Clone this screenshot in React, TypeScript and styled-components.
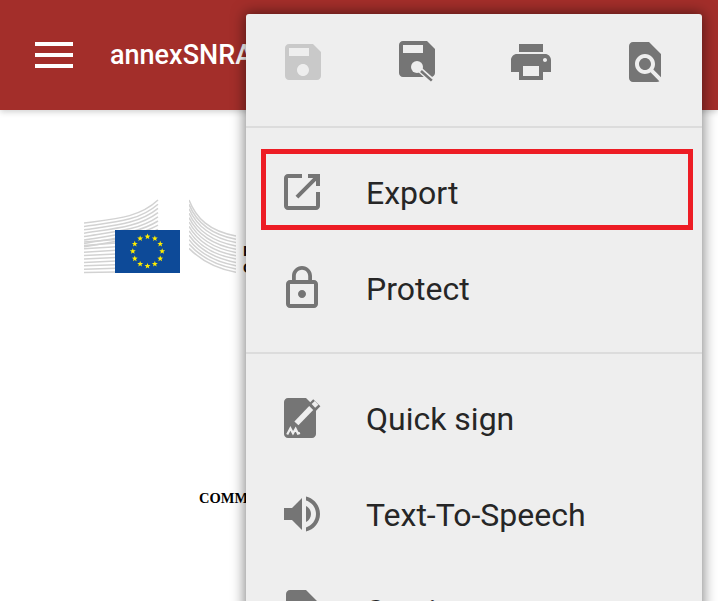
import React, { FC } from "react";
import styled, { createGlobalStyle } from "styled-components";

const GlobalStyle = createGlobalStyle`
    html, body{
        margin: 0;
        padding: 0;
        background: #fff;
    }
    body{
        font-family: "Roboto", "Liberation Sans", sans-serif;
    }
`;

const Screen = styled.div`
    width: 718px;
    height: 601px;
    position: relative;
    overflow: hidden;
    background: #fff;
`;

const Header = styled.header`
    height: 110px;
    background: #a32e2a;
    display: flex;
    align-items: center;
    padding-left: 35px;
    gap: 37px;
    box-shadow: 0 2px 6px rgba(0,0,0,.18);
`;

const Title = styled.h1`
    margin: 0;
    color: #fff;
    font-size: 27px;
    font-weight: 500;
    white-space: nowrap;
`;

const Page = styled.main`
    padding: 88px 0 0 84px;
`;

const LogoRow = styled.div`
    display: flex;
    align-items: flex-start;
    gap: 7px;
`;

const LogoCaption = styled.div`
    padding-top: 44px;
    font-family: "Liberation Sans", sans-serif;
    font-weight: 700;
    font-size: 15px;
    line-height: 17px;
    color: #111;
    white-space: nowrap;
`;

const DocHeading = styled.div`
    margin: 214px 0 0 115px;
    font-family: "Liberation Serif", serif;
    font-weight: 700;
    font-size: 14.5px;
    line-height: 16px;
    color: #000;
    white-space: nowrap;
`;

const Menu = styled.nav`
    position: absolute;
    left: 246px;
    top: 14px;
    width: 456px;
    background: #eeeeee;
    border-radius: 3px 3px 0 0;
    box-shadow: 0 0 14px 1px rgba(0,0,0,.5);
`;

const ToolRow = styled.div`
    display: grid;
    grid-template-columns: repeat(4, 1fr);
    padding-bottom: 16px;
`;

const ToolButton = styled.button`
    height: 96px;
    border: none;
    background: none;
    padding: 0;
    display: flex;
    align-items: center;
    justify-content: center;
`;

const Section = styled.section`
    padding: 16px 0;
    border-top: 2px solid #dcdcdc;
`;

const Item = styled.div`
    height: 96px;
    position: relative;
    display: flex;
    align-items: center;
    padding-left: 32px;
    gap: 40px;
    color: #262626;
    font-size: 32px;
`;

const ItemLabel = styled.span`
    padding-top: 2px;
`;

const Highlight = styled.div`
    position: absolute;
    left: 15px;
    right: 9px;
    top: 5px;
    bottom: 10px;
    border: 5px solid #ed1c24;
`;

const Icon = styled.svg<{ $tone?: string }>`
    width: 48px;
    height: 48px;
    flex: none;
    display: block;
    fill: ${(props) => props.$tone || "#757575"};
`;

const SAVE = "M17 3H5c-1.11 0-2 .9-2 2v14c0 1.1.89 2 2 2h14c1.1 0 2-.9 2-2V7l-4-4zm-5 16c-1.66 0-3-1.34-3-3s1.34-3 3-3 3 1.34 3 3-1.34 3-3 3zm3-10H5V5h10v4z";
const SAVE_SOLID = "M17 3H5c-1.11 0-2 .9-2 2v14c0 1.1.89 2 2 2h14c1.1 0 2-.9 2-2V7l-4-4zm-2 6H5V5h10v4z";
const PRINT = "M19 8H5c-1.66 0-3 1.34-3 3v6h4v4h12v-4h4v-6c0-1.66-1.34-3-3-3zm-3 11H8v-5h8v5zm3-7c-.55 0-1-.45-1-1s.45-1 1-1 1 .45 1 1-.45 1-1 1zm-1-9H6v4h12V3z";
const FIND = "M20 19.59V8l-6-6H6c-1.1 0-1.99.9-1.99 2L4 20c0 1.1.89 2 1.99 2H18c.45 0 .85-.15 1.19-.4l-4.43-4.43c-.8.52-1.74.83-2.76.83-2.76 0-5-2.24-5-5s2.24-5 5-5 5 2.24 5 5c0 1.02-.31 1.96-.83 2.75L20 19.59zM9 13c0 1.66 1.34 3 3 3s3-1.34 3-3-1.34-3-3-3-3 1.34-3 3z";
const EXPORT = "M19 19H5V5h7V3H5c-1.11 0-2 .9-2 2v14c0 1.1.89 2 2 2h14c1.1 0 2-.9 2-2v-7h-2v7zM15 3v2h2.59l-8.83 8.83 1.41 1.41L19 6.41V9h2V3h-6z";
const LOCK = "M12 17c1.1 0 2-.9 2-2s-.9-2-2-2-2 .9-2 2 .9 2 2 2zm6-9h-1V6c0-2.76-2.24-5-5-5S7 3.24 7 6v2H6c-1.1 0-2 .9-2 2v10c0 1.1.9 2 2 2h12c1.1 0 2-.9 2-2V10c0-1.1-.9-2-2-2zM8.9 6c0-1.71 1.39-3.1 3.1-3.1s3.1 1.39 3.1 3.1v2H8.9V6zM18 20H6V10h12v10z";
const SPEAKER = "M3 9v6h4l5 5V4L7 9H3zm13.5 3c0-1.77-1.02-3.29-2.5-4.03v8.05c1.48-.73 2.5-2.25 2.5-4.02zM14 3.23v2.06c2.89.86 5 3.54 5 6.71s-2.11 5.85-5 6.71v2.06c4.01-.91 7-4.49 7-8.77s-2.99-7.86-7-8.77z";
const DOC = "M14 2H6c-1.1 0-1.99.9-1.99 2L4 20c0 1.1.89 2 1.99 2H18c1.1 0 2-.9 2-2V8l-6-6z";

const Glyph: FC<{ d: string; tone?: string }> = ({ d, tone }) => (
    <Icon viewBox="0 0 24 24" $tone={tone}>
        <path d={d} />
    </Icon>
);

// sits 3px higher than the other toolbar icons because of the pencil
const SaveAsIcon: FC = () => (
    <Icon viewBox="0 1.5 24 24">
        <path d={SAVE_SOLID} />
        <circle cx="12" cy="16" r="3" fill="#eee" />
        <path d="M13 17l6.2 5.6" stroke="#eee" strokeWidth="2.8" />
        <path d="M14 18l5.4 4.8" stroke="#757575" strokeWidth="1.3" />
    </Icon>
);

const QuickSignIcon: FC = () => (
    <Icon viewBox="0 0 24 24">
        <path d="M5 2h9l5 5v13c0 1.1-.9 2-2 2H5c-1.1 0-2-.9-2-2V4c0-1.1.9-2 2-2z" />
        <path d="M14 10L19.4 4.4" stroke="#757575" strokeWidth="5" fill="none" />
        <path d="M9.2 14.7L16.6 7" stroke="#eee" strokeWidth="2.8" fill="none" />
        <path d="M17.7 5.9L19.3 4.4" stroke="#eee" strokeWidth="2.6" fill="none" />
        <path d="M4.6 20.2l1.6-3 1.3 2.4 1.3-2.2 1.2 2.4 1-.3" stroke="#eee" strokeWidth="1.1" fill="none" />
    </Icon>
);

const LogoSvg = styled.svg`
    width: 152px;
    height: 76px;
    flex: none;
    display: block;
    fill: none;
`;

const WingLine = styled.path`
    stroke: #d2d2d2;
    stroke-width: 1.5;
`;

const FLAG_CENTER = { x: 63.5, y: 53.3 };
const STAR_RADIUS = 14.7;

const starPoints = (cx: number, cy: number, r: number) => {
    const pts: string[] = [];
    for (let i = 0; i < 10; i++) {
        const rad = i % 2 === 0 ? r : r * 0.42;
        const a = (Math.PI / 5) * i - Math.PI / 2;
        pts.push(`${(cx + rad * Math.cos(a)).toFixed(2)},${(cy + rad * Math.sin(a)).toFixed(2)}`);
    }
    return pts.join(" ");
};

const Logo: FC = () => {
    const leftTop = Array.from({ length: 8 }).map((_, i) => (
        <WingLine key={i} d={`M0 ${25 + i * 3.4} C30 ${21 + i * 3.2} 55 ${20 + i * 3} 74 ${2 + i * 4.2}`} />
    ));
    const leftBottom = Array.from({ length: 10 }).map((_, i) => (
        <WingLine key={i} d={`M0 ${44 + i * 3.4} L32 ${41.5 + i * 3.6}`} />
    ));
    const right = Array.from({ length: 12 }).map((_, i) => (
        <WingLine key={i} d={`M105 ${2 + i * 4.4} C112 ${20 + i * 3.4} 125 ${33 + i * 3.3} 152 ${38 + i * 3.3}`} />
    ));
    const stars = Array.from({ length: 12 }).map((_, i) => {
        const a = (Math.PI / 6) * i;
        const x = FLAG_CENTER.x + STAR_RADIUS * Math.sin(a);
        const y = FLAG_CENTER.y - STAR_RADIUS * Math.cos(a);
        return <polygon key={i} points={starPoints(x, y, 3.1)} fill="#ffed00" />;
    });
    return (
        <LogoSvg viewBox="0 0 152 76">
            {leftTop}
            {leftBottom}
            {right}
            <rect x="31" y="32" width="65" height="43" fill="#0d4a98" />
            <rect x="96" y="0" width="9" height="76" fill="#fff" />
            {stars}
        </LogoSvg>
    );
};

const MenuBars = styled.svg`
    width: 38px;
    height: 26px;
    flex: none;
    display: block;
    fill: #fff;
`;

const App: FC = () => {
    return (
        <Screen>
            <GlobalStyle />
            <Header>
                <MenuBars viewBox="0 0 38 26">
                    <rect x="0" y="0" width="38" height="4" />
                    <rect x="0" y="11" width="38" height="4" />
                    <rect x="0" y="22" width="38" height="4" />
                </MenuBars>
                <Title>annexSNRA</Title>
            </Header>
            <Page>
                <LogoRow>
                    <Logo />
                    <LogoCaption>
                        European
                        <br />
                        Commission
                    </LogoCaption>
                </LogoRow>
                <DocHeading>COMMISSION STAFF WORKING DOCUMENT</DocHeading>
            </Page>
            <Menu>
                <ToolRow>
                    <ToolButton><Glyph d={SAVE} tone="#c9c9c9" /></ToolButton>
                    <ToolButton><SaveAsIcon /></ToolButton>
                    <ToolButton><Glyph d={PRINT} /></ToolButton>
                    <ToolButton><Glyph d={FIND} /></ToolButton>
                </ToolRow>
                <Section>
                    <Item>
                        <Glyph d={EXPORT} />
                        <ItemLabel>Export</ItemLabel>
                        <Highlight />
                    </Item>
                    <Item>
                        <Glyph d={LOCK} />
                        <ItemLabel>Protect</ItemLabel>
                    </Item>
                </Section>
                <Section>
                    <Item>
                        <QuickSignIcon />
                        <ItemLabel>Quick sign</ItemLabel>
                    </Item>
                    <Item>
                        <Glyph d={SPEAKER} />
                        <ItemLabel>Text-To-Speech</ItemLabel>
                    </Item>
                    <Item>
                        <Glyph d={DOC} />
                        <ItemLabel>Services</ItemLabel>
                    </Item>
                </Section>
            </Menu>
        </Screen>
    );
};

export default App;
